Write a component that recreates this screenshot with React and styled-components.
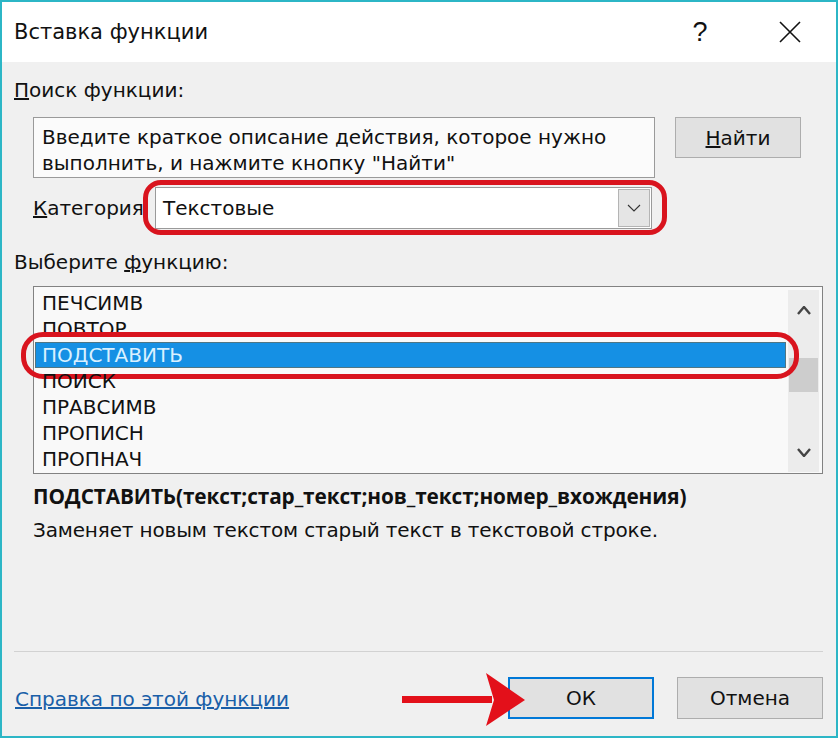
import React from "react";
import styled, { createGlobalStyle } from "styled-components";

const GlobalStyle = createGlobalStyle`
  html, body {
    margin: 0;
    padding: 0;
    background: #ffffff;
  }
  * {
    box-sizing: border-box;
  }
`;

const ui = {
  font: `"DejaVu Sans", "Open Sans", sans-serif`,
  face: "#f0f0f0",
  button: "#e1e1e1",
  buttonBorder: "#adadad",
  field: "#ffffff",
  fieldBorder: "#9a9a9a",
  red: "#d9141e",
  accent: "#0078d7",
};

const Window = styled.div`
  width: 838px;
  height: 738px;
  border: 2px solid #2cb6c6;
  display: flex;
  flex-direction: column;
  font-family: ${ui.font};
  font-size: 20px;
  color: #111;
`;

const TitleBar = styled.div`
  height: 60px;
  background: #ffffff;
  display: flex;
  align-items: center;
  padding: 0 0 0 12px;
`;

const Title = styled.div`
  flex: 1;
  font-size: 21px;
  padding-bottom: 1px;
`;

const TitleButton = styled.div`
  width: ${(p) => p.$w}px;
  height: 60px;
  display: flex;
  align-items: center;
  justify-content: center;
  font-family: "Liberation Sans", sans-serif;
  font-size: 27px;
  font-weight: 400;
`;

const Body = styled.div`
  flex: 1;
  background: ${ui.face};
  display: flex;
  flex-direction: column;
  padding: 16px 13px 17px 12px;
`;

const Label = styled.div`
  line-height: 24px;
  margin-top: ${(p) => p.$top || 0}px;
  padding-left: ${(p) => p.$indent || 0}px;
  letter-spacing: ${(p) => p.$tight || 0}px;
  white-space: nowrap;
`;

const Signature = styled(Label)`
  font-family: "Open Sans", sans-serif;
  font-weight: 700;
  font-size: 20.8px;
  letter-spacing: -0.1px;
`;

const SearchRow = styled.div`
  display: flex;
  align-items: flex-start;
  gap: 20px;
  margin-top: 15px;
  padding-left: 19px;
`;

const SearchBox = styled.div`
  width: 622px;
  height: 61px;
  background: #fbfbfb;
  border: 1px solid ${ui.fieldBorder};
  padding: 6px 8px 0 8px;
  line-height: 26px;
  white-space: nowrap;
`;

const Button = styled.div`
  position: relative;
  width: ${(p) => p.$w || 146}px;
  height: ${(p) => p.$h || 42}px;
  background: ${ui.button};
  border: ${(p) => (p.$default ? `2px solid ${ui.accent}` : `1px solid ${ui.buttonBorder}`)};
  display: flex;
  align-items: center;
  justify-content: center;
`;

const CategoryRow = styled.div`
  display: flex;
  align-items: center;
  margin-top: 9px;
  padding-left: 19px;
  height: 42px;
`;

const CategoryLabel = styled.div`
  width: 122px;
  white-space: nowrap;
`;

const Select = styled.div`
  position: relative;
  width: 497px;
  height: 42px;
  background: ${ui.field};
  border: 1px solid ${ui.fieldBorder};
  display: flex;
  align-items: center;
  padding-left: 7px;
`;

const SelectValue = styled.div`
  flex: 1;
`;

const DropButton = styled.div`
  width: 32px;
  height: 38px;
  margin-right: 1px;
  background: #e5e5e5;
  border: 1px solid #b4b4b4;
  display: flex;
  align-items: center;
  justify-content: center;
`;

const Ring = styled.div`
  position: absolute;
  top: ${(p) => p.$t}px;
  left: ${(p) => p.$l}px;
  right: ${(p) => p.$r}px;
  bottom: ${(p) => p.$b}px;
  border: 5px solid ${ui.red};
  border-radius: ${(p) => p.$radius}px;
  pointer-events: none;
`;

const ListBox = styled.div`
  margin-top: 12px;
  margin-left: 19px;
  width: 790px;
  height: 188px;
  background: #f9f9f9;
  border: 1px solid #828282;
  display: flex;
  padding: 3px 3px 1px 1px;
`;

const Items = styled.div`
  flex: 1;
  display: flex;
  flex-direction: column;
`;

const Item = styled.div`
  position: relative;
  height: 26px;
  line-height: 26px;
  padding-left: 7px;
  margin-right: 2px;
  background: ${(p) => (p.$selected ? "#1590e4" : "transparent")};
  color: ${(p) => (p.$selected ? "#d9f0ff" : "#111")};
  outline: ${(p) => (p.$selected ? "1px solid #4f7684" : "none")};
  outline-offset: -1px;
`;

const ScrollBar = styled.div`
  width: 31px;
  background: #ececec;
  display: flex;
  flex-direction: column;
  align-items: center;
`;

const ScrollArrow = styled.div`
  height: 40px;
  display: flex;
  align-items: center;
  justify-content: center;
`;

const ScrollTrack = styled.div`
  flex: 1;
  width: 100%;
  padding-top: 28px;
`;

const Thumb = styled.div`
  height: 34px;
  margin: 0 1px;
  background: #cdcdcd;
`;

const Separator = styled.div`
  margin-top: auto;
  height: 1px;
  background: #d2d2d2;
`;

const Footer = styled.div`
  display: flex;
  align-items: center;
  margin-top: 25px;
  height: 42px;
`;

const HelpLink = styled.a`
  flex: 1;
  color: #1a5fa8;
  text-decoration: underline;
  padding-left: 1px;
  padding-top: 2px;
`;

const ButtonGap = styled.div`
  width: 23px;
`;

const Arrow = styled.svg`
  position: absolute;
  left: -108px;
  top: -6px;
`;

const Chevron = ({ up, w = 12, h = 7, stroke = "#333", sw = 1.3 }) => (
  <svg width={w} height={h} viewBox={`0 0 ${w} ${h}`}>
    {up ? (
      <polyline points={`1,${h - 1} ${w / 2},1 ${w - 1},${h - 1}`} fill="none" stroke={stroke} strokeWidth={sw} />
    ) : (
      <polyline points={`1,1 ${w / 2},${h - 1} ${w - 1},1`} fill="none" stroke={stroke} strokeWidth={sw} />
    )}
  </svg>
);

const functions = ["ПЕЧСИМВ", "ПОВТОР", "ПОДСТАВИТЬ", "ПОИСК", "ПРАВСИМВ", "ПРОПИСН", "ПРОПНАЧ"];

export default function App() {
  return (
    <>
      <GlobalStyle />
      <Window>
        <TitleBar>
          <Title>Вставка функции</Title>
          <TitleButton $w={88}>?</TitleButton>
          <TitleButton $w={92}>
            <svg width="22" height="22" viewBox="0 0 22 22">
              <path d="M1 1 L21 21 M21 1 L1 21" stroke="#111" strokeWidth="1.6" />
            </svg>
          </TitleButton>
        </TitleBar>

        <Body>
          <Label>
            <u>П</u>оиск функции:
          </Label>

          <SearchRow>
            <SearchBox>
              Введите краткое описание действия, которое нужно
              <br />
              выполнить, и нажмите кнопку "Найти"
            </SearchBox>
            <Button $w={126} $h={41}>
              <span>
                <u>Н</u>айти
              </span>
            </Button>
          </SearchRow>

          <CategoryRow>
            <CategoryLabel>
              <u>К</u>атегория
            </CategoryLabel>
            <Select>
              <SelectValue>Текстовые</SelectValue>
              <DropButton>
                <Chevron w={14} h={8} sw={1.1} />
              </DropButton>
              <Ring $t={-8} $l={-13} $r={-16} $b={-7} $radius={18} />
            </Select>
          </CategoryRow>

          <Label $top={21}>
            Выберите <u>ф</u>ункцию:
          </Label>

          <ListBox>
            <Items>
              {functions.map((name) => (
                <Item key={name} $selected={name === "ПОДСТАВИТЬ"}>
                  {name}
                  {name === "ПОДСТАВИТЬ" && <Ring $t={-10} $l={-14} $r={-13} $b={-11} $radius={22} />}
                </Item>
              ))}
            </Items>
            <ScrollBar>
              <ScrollArrow>
                <Chevron up w={14} h={9} sw={2.4} stroke="#444" />
              </ScrollArrow>
              <ScrollTrack>
                <Thumb />
              </ScrollTrack>
              <ScrollArrow>
                <Chevron w={14} h={9} sw={2.4} stroke="#444" />
              </ScrollArrow>
            </ScrollBar>
          </ListBox>

          <Signature $top={10} $indent={19}>
            ПОДСТАВИТЬ(текст;стар_текст;нов_текст;номер_вхождения)
          </Signature>
          <Label $top={10} $indent={19} $tight={-0.15}>
            Заменяет новым текстом старый текст в текстовой строке.
          </Label>

          <Separator />

          <Footer>
            <HelpLink href="#">Справка по этой функции</HelpLink>
            <Button $default>
              ОК
              <Arrow width="124" height="54" viewBox="0 0 124 54">
                <rect x="0" y="23" width="90" height="7" fill="#e3101a" />
                <polygon points="84,0 123,27 84,53 92,27" fill="#e3101a" />
              </Arrow>
            </Button>
            <ButtonGap />
            <Button>Отмена</Button>
          </Footer>
        </Body>
      </Window>
    </>
  );
}
